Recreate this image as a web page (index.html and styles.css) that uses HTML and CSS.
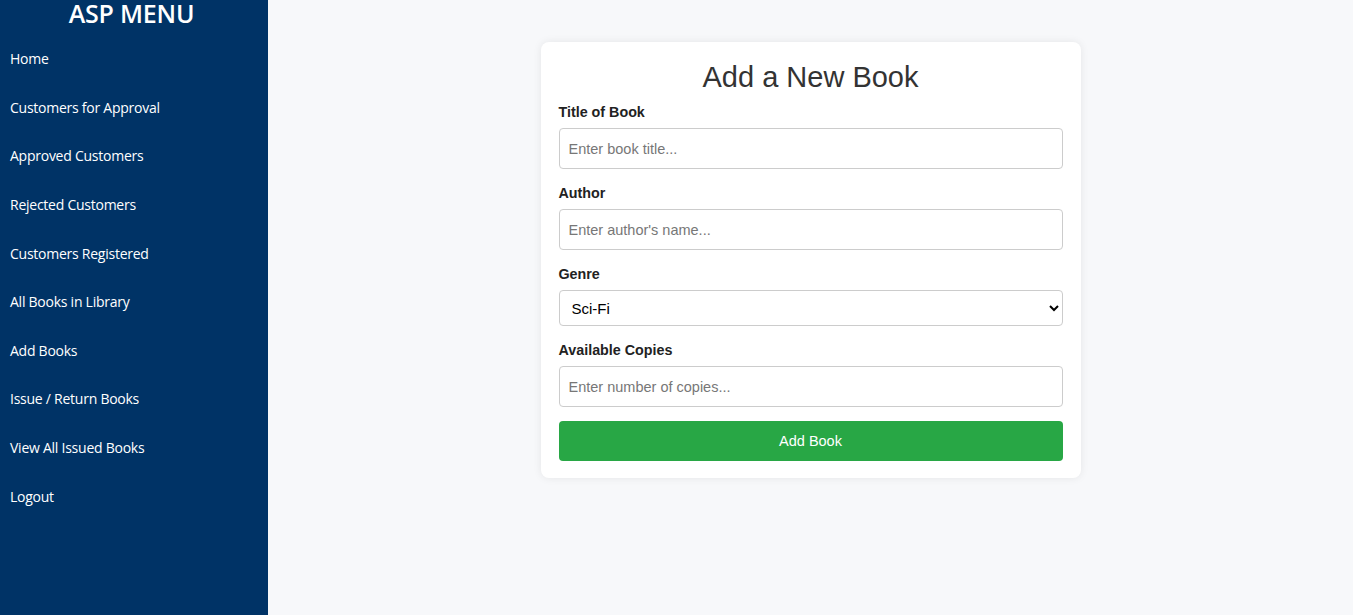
FILE: index.html
```html
<!DOCTYPE html>
<html lang="en">
<head>
<meta charset="utf-8">
<title>Add Book</title>
<link rel="stylesheet" href="styles.css">
</head>
<body>
<div class="layout">
  <aside class="sidebar">
    <h2 class="brand">ASP MENU</h2>
    <nav class="nav">
      <a href="#">Home</a>
      <a href="#">Customers for Approval</a>
      <a href="#">Approved Customers</a>
      <a href="#">Rejected Customers</a>
      <a href="#">Customers Registered</a>
      <a href="#">All Books in Library</a>
      <a href="#">Add Books</a>
      <a href="#">Issue / Return Books</a>
      <a href="#">View All Issued Books</a>
      <a href="#">Logout</a>
    </nav>
  </aside>
  <main class="main">
    <form class="card">
      <h2 class="card-title">Add a New Book</h2>
      <div class="field">
        <label for="title">Title of Book</label>
        <input id="title" type="text" placeholder="Enter book title...">
      </div>
      <div class="field">
        <label for="author">Author</label>
        <input id="author" type="text" placeholder="Enter author's name...">
      </div>
      <div class="field">
        <label for="genre">Genre</label>
        <select id="genre">
          <option>Sci-Fi</option>
          <option>Fiction</option>
          <option>Non-Fiction</option>
        </select>
      </div>
      <div class="field last">
        <label for="copies">Available Copies</label>
        <input id="copies" type="text" placeholder="Enter number of copies...">
      </div>
      <button type="button" class="btn">Add Book</button>
    </form>
  </main>
</div>
</body>
</html>
```

FILE: styles.css
```css
* { box-sizing: border-box; }
html, body { margin: 0; padding: 0; height: 100%; }
body {
  font-family: "Liberation Sans", Arial, sans-serif;
  background: #f7f8fa;
}
.layout {
  display: flex;
  height: 615px;
}
.sidebar {
  width: 268px;
  flex: 0 0 268px;
  background: #003366;
  color: #fff;
  font-family: "Open Sans", "Noto Sans", sans-serif;
}
.brand {
  margin: 0;
  padding-right: 5px;
  text-align: center;
  font-size: 25px;
  font-weight: 600;
  line-height: 26px;
  height: 35.2px;
  letter-spacing: -0.2px;
}
.nav {
  display: flex;
  flex-direction: column;
}
.nav a {
  display: block;
  color: #fff;
  text-decoration: none;
  font-size: 14px;
  line-height: 18.6px;
  padding: 15px 10px;
  letter-spacing: -0.25px;
}
.main {
  flex: 1;
  display: flex;
  justify-content: center;
  align-items: flex-start;
  padding-top: 42px;
}
.card {
  width: 540px;
  background: #fff;
  border-radius: 8px;
  box-shadow: 0 0 8px rgba(0, 0, 0, 0.08);
  padding: 18px 18px 17px;
  display: flex;
  flex-direction: column;
}
.card-title {
  margin: 0 0 10px;
  text-align: center;
  font-size: 29px;
  font-weight: 400;
  line-height: 34px;
  color: #333;
}
.field {
  display: flex;
  flex-direction: column;
  margin-bottom: 16px;
}
.field.last { margin-bottom: 14px; }
.field label {
  font-size: 14.3px;
  font-weight: 700;
  line-height: 16px;
  color: #222;
  margin-bottom: 8px;
}
.field input,
.field select {
  width: 100%;
  font-family: "Liberation Sans", Arial, sans-serif;
  border: 1px solid #ccc;
  border-radius: 4px;
  background: #fff;
  color: #000;
}
.field input {
  height: 41px;
  padding: 0 9px;
  font-size: 14.5px;
}
.field input::placeholder { color: #777; }
.field select {
  height: 36px;
  padding: 0 8px;
  font-size: 15px;
}
.btn {
  height: 40px;
  border: none;
  border-radius: 4px;
  background: #28a745;
  color: #fff;
  font-family: "Liberation Sans", Arial, sans-serif;
  font-size: 14.5px;
  cursor: pointer;
}
```
